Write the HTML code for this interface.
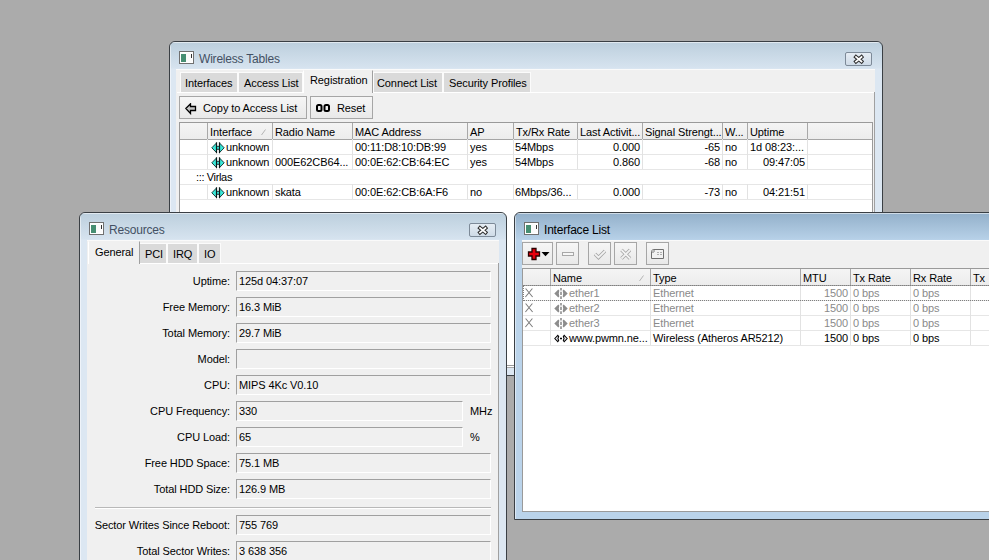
<!DOCTYPE html><html><head><meta charset="utf-8"><style>
*{box-sizing:border-box;margin:0;padding:0}
html,body{width:989px;height:560px;overflow:hidden;background:#ababab;font-family:"Liberation Sans",sans-serif;font-size:11px;letter-spacing:-0.1px;color:#000}
.abs{position:absolute}
.win{position:absolute;border:1px solid #3a3f44;border-radius:6px 6px 0 0;overflow:hidden}
.win.inact{background:linear-gradient(#bccfdd 0px,#d6e3ef 26px,#dce7f2 27px,#dce7f2 100%);}
.win.act{background:linear-gradient(#93b0ca 0px,#b6d0e7 26px,#bad3ea 27px,#bad3ea 100%);}
.hl{position:absolute;left:0;right:0;top:0;height:1px;background:rgba(255,255,255,.55)}
.hlv{position:absolute;left:0;top:0;bottom:0;width:1px;background:rgba(255,255,255,.5)}
.title{position:absolute;font-size:12px;line-height:12px;letter-spacing:-0.2px;white-space:nowrap}
.inact .title{color:#435063}
.act .title{color:#000}
.content{position:absolute;background:#f0f0f0;overflow:hidden;border-top:1px solid #fafafa}
.wicon{position:absolute;width:15px;height:13px;border:1px solid #707070;background:#fbfbfb;box-shadow:inset 0 0 0 1px #fff}
.wicon i{position:absolute;left:1px;top:2px;width:5px;height:8px;background:#468e72}
.wicon b{position:absolute;left:11px;top:2px;width:1px;height:4px;background:#333}
.close{position:absolute;width:27px;height:14px;border:1px solid #7d8a98;border-radius:2px;background:linear-gradient(#e6edf4,#cfdbe7)}
.tab{position:absolute;height:20px;background:#dadada;border:1px solid #fbfbfb;border-bottom:none;white-space:nowrap;padding-left:5px;line-height:20px}
.tab.sel{background:#f0f0f0;border-color:#f0f0f0;height:23px;line-height:19px;z-index:2}
.btn{position:absolute;border:1px solid #a6a6a6;background:linear-gradient(#f6f6f6,#e9e9e9);white-space:nowrap}
.txt{position:absolute;white-space:nowrap;line-height:13px}
.grid{position:absolute;background:#fff;border:1px solid #9a9a9a;overflow:hidden}
.hdr{position:absolute;left:0;right:0;top:0;height:17px;background:linear-gradient(#f4f4f4,#ececec);border-bottom:1px solid #a5a5a5}
.vl{position:absolute;width:1px;background:#e2e2e2}
.vlh{position:absolute;width:1px;background:#a8a8a8;top:0;height:16px}
.hlr{position:absolute;height:1px;background:#e6e6e6;left:0;right:0}
.field{position:absolute;height:20px;border-top:1px solid #a0a0a0;border-left:1px solid #a0a0a0;border-bottom:1px solid #fff;border-right:1px solid #fff;background:#f0f0f0}
.gray{color:#8a8a8a}
</style></head><body>
<div class="win inact" style="left:169px;top:41px;width:714px;height:335px">
<div class="hl"></div><div class="hlv"></div>
<div class="wicon" style="left:9px;top:9px"><i></i><b></b></div>
<div class="title" style="left:29px;top:11px">Wireless Tables</div>
<div class="close" style="left:675px;top:10px"><svg width="25" height="12" style="position:absolute;left:0;top:0"><path d="M10 4 L15.5 8.5 M15.5 4 L10 8.5" stroke="#303030" stroke-width="3.8" stroke-linecap="square"/><path d="M10 4 L15.5 8.5 M15.5 4 L10 8.5" stroke="#fff" stroke-width="1.7" stroke-linecap="square"/></svg></div>
<div class="content" style="left:6px;top:27px;width:699px;height:299px">
<div class="tab" style="left:4px;top:2px;width:58px;padding-left:4px">Interfaces</div>
<div class="tab" style="left:62px;top:2px;width:65px;padding-left:5px">Access List</div>
<div class="tab sel" style="left:127px;top:0px;width:70px;padding-left:6px;border-left-color:#fff;border-right-color:#a0a0a0">Registration</div>
<div class="tab" style="left:197px;top:2px;width:70px;padding-left:3px">Connect List</div>
<div class="tab" style="left:267px;top:2px;width:88px;padding-left:5px">Security Profiles</div>
<div class="abs" style="left:1px;top:22px;width:697px;height:1px;background:#fff"></div>
<div class="abs" style="left:698px;top:22px;width:1px;height:300px;background:#a0a0a0"></div>
<div class="btn" style="left:3px;top:26px;width:128px;height:23px"><svg width="12" height="12" style="position:absolute;left:5px;top:6px"><path d="M0.8 5.5 L5.5 0.8 L5.5 3.5 L10.5 3.5 L10.5 7.5 L5.5 7.5 L5.5 10.5 Z" fill="#c4c4c4" stroke="#000" stroke-width="1.3" stroke-linejoin="miter"/></svg><div class="txt" style="left:23px;top:5px">Copy to Access List</div></div>
<div class="btn" style="left:134px;top:26px;width:63px;height:23px"><svg width="16" height="10" style="position:absolute;left:5px;top:7px"><rect x="1" y="1" width="4.5" height="6" rx="1.5" fill="none" stroke="#000" stroke-width="2"/><rect x="8.5" y="1" width="4.5" height="6" rx="1.5" fill="none" stroke="#000" stroke-width="2"/></svg><div class="txt" style="left:26px;top:5px">Reset</div></div>
<div class="grid" style="left:3px;top:52px;width:694px;height:244px">
<div class="hdr"></div>
<div class="vlh" style="left:27px"></div>
<div class="vlh" style="left:92px"></div>
<div class="vlh" style="left:172px"></div>
<div class="vlh" style="left:287px"></div>
<div class="vlh" style="left:333px"></div>
<div class="vlh" style="left:397px"></div>
<div class="vlh" style="left:462px"></div>
<div class="vlh" style="left:542px"></div>
<div class="vlh" style="left:567px"></div>
<div class="vlh" style="left:627px"></div>
<div class="txt" style="left:30px;top:3px">Interface</div>
<div class="txt" style="left:95px;top:3px">Radio Name</div>
<div class="txt" style="left:175px;top:3px">MAC Address</div>
<div class="txt" style="left:290px;top:3px">AP</div>
<div class="txt" style="left:336px;top:3px">Tx/Rx Rate</div>
<div class="txt" style="left:400px;top:3px">Last Activit...</div>
<div class="txt" style="left:465px;top:3px">Signal Strengt...</div>
<div class="txt" style="left:545px;top:3px">W...</div>
<div class="txt" style="left:570px;top:3px">Uptime</div>
<svg class="abs" style="left:81px;top:6px" width="6" height="7"><path d="M0.5 6 L4.5 0.5" stroke="#b4b4b4" stroke-width="1"/></svg>
<div class="hlr" style="top:31px"></div>
<div class="hlr" style="top:46px"></div>
<div class="hlr" style="top:61px"></div>
<div class="hlr" style="top:76px"></div>
<div class="vl" style="left:27px;top:16px;height:30px"></div>
<div class="vl" style="left:27px;top:61px;height:15px"></div>
<div class="vl" style="left:92px;top:16px;height:30px"></div>
<div class="vl" style="left:92px;top:61px;height:15px"></div>
<div class="vl" style="left:172px;top:16px;height:30px"></div>
<div class="vl" style="left:172px;top:61px;height:15px"></div>
<div class="vl" style="left:287px;top:16px;height:30px"></div>
<div class="vl" style="left:287px;top:61px;height:15px"></div>
<div class="vl" style="left:333px;top:16px;height:30px"></div>
<div class="vl" style="left:333px;top:61px;height:15px"></div>
<div class="vl" style="left:397px;top:16px;height:30px"></div>
<div class="vl" style="left:397px;top:61px;height:15px"></div>
<div class="vl" style="left:462px;top:16px;height:30px"></div>
<div class="vl" style="left:462px;top:61px;height:15px"></div>
<div class="vl" style="left:542px;top:16px;height:30px"></div>
<div class="vl" style="left:542px;top:61px;height:15px"></div>
<div class="vl" style="left:567px;top:16px;height:30px"></div>
<div class="vl" style="left:567px;top:61px;height:15px"></div>
<div class="vl" style="left:627px;top:16px;height:30px"></div>
<div class="vl" style="left:627px;top:61px;height:15px"></div>
<svg class="abs" style="left:31px;top:19px" width="16" height="13"><path d="M0.8 5.8 L5.5 1 V4.3 H8.5 V1 L13.2 5.8 L8.5 10.6 V7.3 H5.5 V10.6 Z" fill="#3ae8d8" stroke="#0a2a2a" stroke-width="0.9" stroke-linejoin="miter"/><path d="M5.5 0.3 V11.3 M8.5 0.3 V11.3" stroke="#0a1a1a" stroke-width="1.2"/></svg>
<div class="txt" style="left:46px;top:18px">unknown</div>
<div class="txt" style="left:95px;top:18px"></div>
<div class="txt" style="left:175px;top:18px">00:11:D8:10:DB:99</div>
<div class="txt" style="left:290px;top:18px">yes</div>
<div class="txt" style="left:335px;top:18px">54Mbps</div>
<div class="txt" style="right:232px;top:18px">0.000</div>
<div class="txt" style="right:152px;top:18px">-65</div>
<div class="txt" style="left:545px;top:18px">no</div>
<div class="txt" style="left:570px;top:18px">1d 08:23:...</div>
<svg class="abs" style="left:31px;top:34px" width="16" height="13"><path d="M0.8 5.8 L5.5 1 V4.3 H8.5 V1 L13.2 5.8 L8.5 10.6 V7.3 H5.5 V10.6 Z" fill="#3ae8d8" stroke="#0a2a2a" stroke-width="0.9" stroke-linejoin="miter"/><path d="M5.5 0.3 V11.3 M8.5 0.3 V11.3" stroke="#0a1a1a" stroke-width="1.2"/></svg>
<div class="txt" style="left:46px;top:33px">unknown</div>
<div class="txt" style="left:95px;top:33px">000E62CB64...</div>
<div class="txt" style="left:175px;top:33px">00:0E:62:CB:64:EC</div>
<div class="txt" style="left:290px;top:33px">yes</div>
<div class="txt" style="left:335px;top:33px">54Mbps</div>
<div class="txt" style="right:232px;top:33px">0.860</div>
<div class="txt" style="right:152px;top:33px">-68</div>
<div class="txt" style="left:545px;top:33px">no</div>
<div class="txt" style="right:67px;top:33px">09:47:05</div>
<svg class="abs" style="left:31px;top:64px" width="16" height="13"><path d="M0.8 5.8 L5.5 1 V4.3 H8.5 V1 L13.2 5.8 L8.5 10.6 V7.3 H5.5 V10.6 Z" fill="#3ae8d8" stroke="#0a2a2a" stroke-width="0.9" stroke-linejoin="miter"/><path d="M5.5 0.3 V11.3 M8.5 0.3 V11.3" stroke="#0a1a1a" stroke-width="1.2"/></svg>
<div class="txt" style="left:46px;top:63px">unknown</div>
<div class="txt" style="left:95px;top:63px">skata</div>
<div class="txt" style="left:175px;top:63px">00:0E:62:CB:6A:F6</div>
<div class="txt" style="left:290px;top:63px">no</div>
<div class="txt" style="left:335px;top:63px">6Mbps/36...</div>
<div class="txt" style="right:232px;top:63px">0.000</div>
<div class="txt" style="right:152px;top:63px">-73</div>
<div class="txt" style="left:545px;top:63px">no</div>
<div class="txt" style="right:67px;top:63px">04:21:51</div>
<div class="txt" style="left:16px;top:48px;letter-spacing:-0.35px">::: Virlas</div>
</div>
<div class="abs" style="left:0;top:296px;width:699px;height:1px;background:#fff"></div>
<div class="abs" style="left:0;top:297px;width:699px;height:1px;background:#a8a8a8"></div>
</div></div>
<div class="win inact" style="left:79px;top:212px;width:428px;height:360px">
<div class="hl"></div><div class="hlv"></div>
<div class="wicon" style="left:9px;top:9px"><i></i><b></b></div>
<div class="title" style="left:29px;top:11px">Resources</div>
<div class="close" style="left:389px;top:10px"><svg width="25" height="12" style="position:absolute;left:0;top:0"><path d="M10 4 L15.5 8.5 M15.5 4 L10 8.5" stroke="#303030" stroke-width="3.8" stroke-linecap="square"/><path d="M10 4 L15.5 8.5 M15.5 4 L10 8.5" stroke="#fff" stroke-width="1.7" stroke-linecap="square"/></svg></div>
<div class="content" style="left:7px;top:27px;width:412px;height:340px">
<div class="tab sel" style="left:1px;top:0px;width:52px;padding-left:6px;line-height:21px;border-left-color:#fff;border-right-color:#a0a0a0">General</div>
<div class="tab" style="left:52px;top:2px;width:28px;line-height:21px">PCI</div>
<div class="tab" style="left:80px;top:2px;width:31px;line-height:21px">IRQ</div>
<div class="tab" style="left:111px;top:2px;width:23px;line-height:21px">IO</div>
<div class="abs" style="left:1px;top:22px;width:410px;height:1px;background:#fff"></div>
<div class="txt" style="left:0;width:143px;text-align:right;top:34px">Uptime:</div>
<div class="field" style="left:149px;top:30px;width:255px"></div>
<div class="txt" style="left:152px;top:34px">125d 04:37:07</div>
<div class="txt" style="left:0;width:143px;text-align:right;top:60px">Free Memory:</div>
<div class="field" style="left:149px;top:56px;width:255px"></div>
<div class="txt" style="left:152px;top:60px">16.3 MiB</div>
<div class="txt" style="left:0;width:143px;text-align:right;top:86px">Total Memory:</div>
<div class="field" style="left:149px;top:82px;width:255px"></div>
<div class="txt" style="left:152px;top:86px">29.7 MiB</div>
<div class="txt" style="left:0;width:143px;text-align:right;top:112px">Model:</div>
<div class="field" style="left:149px;top:108px;width:255px"></div>
<div class="txt" style="left:152px;top:112px"></div>
<div class="txt" style="left:0;width:143px;text-align:right;top:138px">CPU:</div>
<div class="field" style="left:149px;top:134px;width:255px"></div>
<div class="txt" style="left:152px;top:138px">MIPS 4Kc V0.10</div>
<div class="txt" style="left:0;width:143px;text-align:right;top:164px">CPU Frequency:</div>
<div class="field" style="left:149px;top:160px;width:227px"></div>
<div class="txt" style="left:152px;top:164px">330</div>
<div class="txt" style="left:383px;top:164px">MHz</div>
<div class="txt" style="left:0;width:143px;text-align:right;top:190px">CPU Load:</div>
<div class="field" style="left:149px;top:186px;width:227px"></div>
<div class="txt" style="left:152px;top:190px">65</div>
<div class="txt" style="left:383px;top:190px">%</div>
<div class="txt" style="left:0;width:143px;text-align:right;top:216px">Free HDD Space:</div>
<div class="field" style="left:149px;top:212px;width:255px"></div>
<div class="txt" style="left:152px;top:216px">75.1 MB</div>
<div class="txt" style="left:0;width:143px;text-align:right;top:242px">Total HDD Size:</div>
<div class="field" style="left:149px;top:238px;width:255px"></div>
<div class="txt" style="left:152px;top:242px">126.9 MB</div>
<div class="txt" style="left:0;width:143px;text-align:right;top:278px">Sector Writes Since Reboot:</div>
<div class="field" style="left:149px;top:274px;width:255px"></div>
<div class="txt" style="left:152px;top:278px">755 769</div>
<div class="txt" style="left:0;width:143px;text-align:right;top:304px">Total Sector Writes:</div>
<div class="field" style="left:149px;top:300px;width:255px"></div>
<div class="txt" style="left:152px;top:304px">3 638 356</div>
<div class="abs" style="left:8px;top:266px;width:396px;height:1px;background:#b8b8b8"></div>
<div class="abs" style="left:8px;top:267px;width:396px;height:1px;background:#fff"></div>
<div class="abs" style="left:411px;top:22px;width:1px;height:340px;background:#a0a0a0"></div>
</div></div>
<div class="win act" style="left:514px;top:212px;width:500px;height:308px">
<div class="hl"></div><div class="hlv"></div>
<div class="wicon" style="left:9px;top:9px"><i></i><b></b></div>
<div class="title" style="left:29px;top:11px">Interface List</div>
<div class="content" style="left:7px;top:27px;width:490px;height:272px">
<div class="btn" style="left:0px;top:1px;width:31px;height:23px"></div>
<div class="btn" style="left:34px;top:1px;width:23px;height:23px"></div>
<div class="btn" style="left:66px;top:1px;width:23px;height:23px"></div>
<div class="btn" style="left:92px;top:1px;width:23px;height:23px"></div>
<div class="btn" style="left:124px;top:1px;width:23px;height:23px"></div>
<svg class="abs" style="left:0px;top:1px" width="150" height="24" viewBox="522 242 150 24"><path d="M532 248.5 H536 V252 H539.5 V256 H536 V259.5 H532 V256 H528.5 V252 H532 Z" fill="#e8000e" stroke="#2a0000" stroke-width="1.3" stroke-linejoin="miter"/><path d="M541.5 252 H549.5 L545.5 256.3 Z" fill="#000"/><rect x="562.5" y="252.5" width="11" height="3" fill="#f6f6f6" stroke="#a8a8a8" stroke-width="1"/><path d="M595 254 L598.5 257.5 L605 251" stroke="#a4a4a4" stroke-width="3.4" fill="none" stroke-linejoin="miter"/><path d="M595 254 L598.5 257.5 L605 251" stroke="#f2f2f2" stroke-width="1.8" fill="none" stroke-linejoin="miter"/><path d="M621.5 250 L630 258.5 M630 250 L621.5 258.5" stroke="#a4a4a4" stroke-width="3.4" fill="none"/><path d="M621.5 250 L630 258.5 M630 250 L621.5 258.5" stroke="#f2f2f2" stroke-width="1.8" fill="none"/><path d="M651.5 252 L653.5 249.5 H663.5 V258.5 H651.5 Z" fill="#f2f2f2" stroke="#707070" stroke-width="1"/><circle cx="653" cy="251" r="1.3" fill="#fff" stroke="#707070" stroke-width="0.8"/><path d="M657 252.5 H659 M660 252.5 H662 M657 254.5 H659 M660 254.5 H662" stroke="#b0b0b0" stroke-width="1"/></svg>
<div class="grid" style="left:0px;top:27px;width:480px;height:244px">
<div class="hdr"></div>
<div class="vlh" style="left:27px"></div>
<div class="vlh" style="left:127px"></div>
<div class="vlh" style="left:277px"></div>
<div class="vlh" style="left:327px"></div>
<div class="vlh" style="left:387px"></div>
<div class="vlh" style="left:447px"></div>
<div class="txt" style="left:30px;top:3px">Name</div>
<div class="txt" style="left:130px;top:3px">Type</div>
<div class="txt" style="left:280px;top:3px">MTU</div>
<div class="txt" style="left:330px;top:3px">Tx Rate</div>
<div class="txt" style="left:390px;top:3px">Rx Rate</div>
<div class="txt" style="left:450px;top:3px">Tx</div>
<svg class="abs" style="left:116px;top:6px" width="6" height="7"><path d="M0.5 6 L4.5 0.5" stroke="#b4b4b4" stroke-width="1"/></svg>
<div class="hlr" style="top:31px"></div>
<div class="hlr" style="top:46px"></div>
<div class="hlr" style="top:61px"></div>
<div class="hlr" style="top:76px"></div>
<div class="vl" style="left:27px;top:16px;height:60px"></div>
<div class="vl" style="left:127px;top:16px;height:60px"></div>
<div class="vl" style="left:277px;top:16px;height:60px"></div>
<div class="vl" style="left:327px;top:16px;height:60px"></div>
<div class="vl" style="left:387px;top:16px;height:60px"></div>
<div class="vl" style="left:447px;top:16px;height:60px"></div>
<div class="abs" style="left:0;top:16px;width:478px;height:16px;border:1px dotted #808080"></div>
<svg class="abs" style="left:2px;top:19px" width="9" height="10"><path d="M0.6 0.5 L7.6 9 M7.4 0.5 L0.4 9" stroke="#7c7c7c" stroke-width="1.05"/></svg>
<svg class="abs" style="left:31px;top:19px" width="15" height="12"><path d="M0.3 5.5 L4.3 1.5 L5.3 2.5 L4.8 5.5 L5.3 8.5 L4.3 9.5 Z M13.7 5.5 L9.7 1.5 L8.7 2.5 L9.2 5.5 L8.7 8.5 L9.7 9.5 Z" fill="#8c8c8c"/><path d="M7 0 V2.5 M7 3.8 V7 M7 8.3 V11" stroke="#8e8e8e" stroke-width="1.6"/></svg>
<div class="txt gray" style="left:46px;top:18px">ether1</div>
<div class="txt gray" style="left:130px;top:18px">Ethernet</div>
<div class="txt gray" style="right:153px;top:18px">1500</div>
<div class="txt gray" style="left:330px;top:18px">0 bps</div>
<div class="txt gray" style="left:390px;top:18px">0 bps</div>
<svg class="abs" style="left:2px;top:34px" width="9" height="10"><path d="M0.6 0.5 L7.6 9 M7.4 0.5 L0.4 9" stroke="#7c7c7c" stroke-width="1.05"/></svg>
<svg class="abs" style="left:31px;top:34px" width="15" height="12"><path d="M0.3 5.5 L4.3 1.5 L5.3 2.5 L4.8 5.5 L5.3 8.5 L4.3 9.5 Z M13.7 5.5 L9.7 1.5 L8.7 2.5 L9.2 5.5 L8.7 8.5 L9.7 9.5 Z" fill="#8c8c8c"/><path d="M7 0 V2.5 M7 3.8 V7 M7 8.3 V11" stroke="#8e8e8e" stroke-width="1.6"/></svg>
<div class="txt gray" style="left:46px;top:33px">ether2</div>
<div class="txt gray" style="left:130px;top:33px">Ethernet</div>
<div class="txt gray" style="right:153px;top:33px">1500</div>
<div class="txt gray" style="left:330px;top:33px">0 bps</div>
<div class="txt gray" style="left:390px;top:33px">0 bps</div>
<svg class="abs" style="left:2px;top:49px" width="9" height="10"><path d="M0.6 0.5 L7.6 9 M7.4 0.5 L0.4 9" stroke="#7c7c7c" stroke-width="1.05"/></svg>
<svg class="abs" style="left:31px;top:49px" width="15" height="12"><path d="M0.3 5.5 L4.3 1.5 L5.3 2.5 L4.8 5.5 L5.3 8.5 L4.3 9.5 Z M13.7 5.5 L9.7 1.5 L8.7 2.5 L9.2 5.5 L8.7 8.5 L9.7 9.5 Z" fill="#8c8c8c"/><path d="M7 0 V2.5 M7 3.8 V7 M7 8.3 V11" stroke="#8e8e8e" stroke-width="1.6"/></svg>
<div class="txt gray" style="left:46px;top:48px">ether3</div>
<div class="txt gray" style="left:130px;top:48px">Ethernet</div>
<div class="txt gray" style="right:153px;top:48px">1500</div>
<div class="txt gray" style="left:330px;top:48px">0 bps</div>
<div class="txt gray" style="left:390px;top:48px">0 bps</div>
<svg class="abs" style="left:31px;top:64px" width="15" height="12"><path d="M0.8 5.5 L3.8 2.3 L4.7 3.6 L3.9 5.5 L4.7 7.4 L3.8 8.7 Z M13.2 5.5 L10.2 2.3 L9.3 3.6 L10.1 5.5 L9.3 7.4 L10.2 8.7 Z" fill="#ecebf2" stroke="#000" stroke-width="1.05" stroke-linejoin="miter"/><path d="M6 5.5 H8" stroke="#000" stroke-width="1.4"/></svg>
<div class="txt" style="left:46px;top:63px">www.pwmn.ne...</div>
<div class="txt" style="left:130px;top:63px">Wireless (Atheros AR5212)</div>
<div class="txt" style="right:153px;top:63px">1500</div>
<div class="txt" style="left:330px;top:63px">0 bps</div>
<div class="txt" style="left:390px;top:63px">0 bps</div>
</div>
</div></div>
</body></html>
